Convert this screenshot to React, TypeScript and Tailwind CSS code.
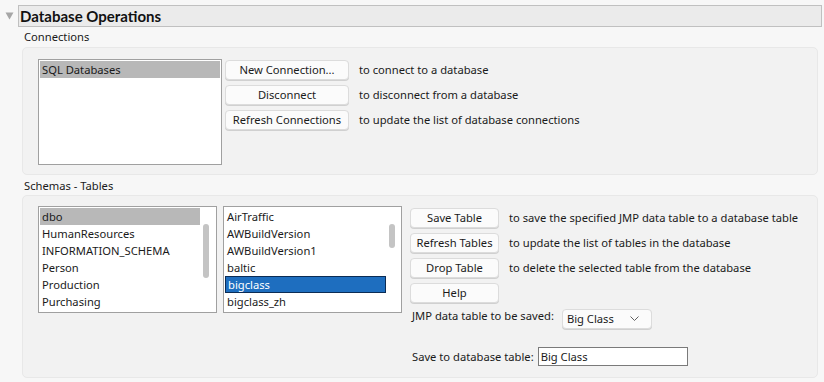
import React from "react";

const font = { fontFamily: '"Noto Sans", "Segoe UI", sans-serif' };

function Btn({ children, w }: { children: React.ReactNode; w: string }) {
  return (
    <div
      className={`${w} h-[20px] flex items-center justify-center rounded-[4px] border border-[#dcdcdc] bg-[#fbfbfb] text-[11.2px] text-[#1a1a1a] leading-none whitespace-nowrap shadow-[0_1px_0_#d0d0d0]`}
    >
      {children}
    </div>
  );
}

function Row({ btn, desc, w }: { btn: string; desc?: string; w: string }) {
  return (
    <div className="flex items-center">
      <Btn w={w}>{btn}</Btn>
      {desc && <span className="ml-[10px] text-[11.2px] text-[#1a1a1a] leading-none whitespace-nowrap">{desc}</span>}
    </div>
  );
}

function Item({ text, sel, blue }: { text: string; sel?: boolean; blue?: boolean }) {
  let cls = "h-[17px] flex items-center pl-[2px] text-[11.2px] leading-none whitespace-nowrap ";
  if (sel) cls += "bg-[#b8b8b8] text-[#1a1a1a] ";
  else if (blue) cls += "bg-[#1e6ebf] text-white border border-[#0b2c55] pl-[1px] ";
  else cls += "text-[#1a1a1a] ";
  return <div className={cls}>{text}</div>;
}

export default function App() {
  return (
    <div className="w-[824px] h-[382px] bg-[#f7f7f7] relative overflow-hidden" style={font}>
      <div className="flex items-center pt-[5px]">
        <div className="w-[18px] flex justify-center">
          <svg width="9" height="8" viewBox="0 0 9 8">
            <path d="M0.5 0.5 L8.5 0.5 L4.5 7.5 Z" fill="#a6a6a6" />
          </svg>
        </div>
        <div className="w-[804px] h-[22px] border border-[#c0c0c0] bg-[#ebebeb] flex items-center pl-[1px]">
          <span
            className="text-[15px] font-bold text-[#111] leading-none"
            style={{ fontFamily: 'Lato, "Noto Sans", sans-serif' }}
          >
            Database Operations
          </span>
        </div>
      </div>

      <div className="ml-[24px] mt-[2px] text-[11.2px] text-[#1a1a1a] leading-none h-[15px] flex items-center">Connections</div>

      <div className="ml-[22px] mt-[3px] w-[796px] h-[128px] rounded-[5px] border border-[#e8e8e8] bg-[#f2f2f2] pl-[15px] pt-[11px]">
        <div className="flex">
          <div className="w-[184px] h-[106px] border border-[#a0a0a0] bg-white p-[1px]">
            <Item text="SQL Databases" sel />
          </div>
          <div className="ml-[3px] mt-[1px] flex flex-col gap-[5px]">
            <Row w="w-[124px]" btn="New Connection..." desc="to connect to a database" />
            <Row w="w-[124px]" btn="Disconnect" desc="to disconnect from a database" />
            <Row w="w-[124px]" btn="Refresh Connections" desc="to update the list of database connections" />
          </div>
        </div>
      </div>

      <div className="ml-[24px] mt-[3px] text-[11.2px] text-[#1a1a1a] leading-none h-[15px] flex items-center">Schemas - Tables</div>

      <div className="ml-[22px] mt-[2px] w-[796px] h-[183px] rounded-[5px] border border-[#e8e8e8] bg-[#f2f2f2] pl-[15px] pt-[10px]">
        <div className="flex">
          <div className="w-[179px] h-[107px] border border-[#a0a0a0] bg-white p-[1px] flex">
            <div className="w-[160px]">
              <Item text="dbo" sel />
              <Item text="HumanResources" />
              <Item text="INFORMATION_SCHEMA" />
              <Item text="Person" />
              <Item text="Production" />
              <Item text="Purchasing" />
            </div>
            <div className="ml-[3px] mt-[16px] w-[6px] h-[54px] rounded-full bg-[#c4c4c4]" />
          </div>
          <div className="ml-[6px] w-[179px] h-[107px] border border-[#a0a0a0] bg-white p-[1px] flex">
            <div className="w-[161px]">
              <Item text="AirTraffic" />
              <Item text="AWBuildVersion" />
              <Item text="AWBuildVersion1" />
              <Item text="baltic" />
              <Item text="bigclass" blue />
              <Item text="bigclass_zh" />
            </div>
            <div className="ml-[3px] mt-[16px] w-[6px] h-[24px] rounded-full bg-[#c4c4c4]" />
          </div>
          <div className="ml-[8px] mt-[2px] flex flex-col">
            <div className="flex flex-col gap-[5px]">
              <Row w="w-[89px]" btn="Save Table" desc="to save the specified JMP data table to a database table" />
              <Row w="w-[89px]" btn="Refresh Tables" desc="to update the list of tables in the database" />
              <Row w="w-[89px]" btn="Drop Table" desc="to delete the selected table from the database" />
              <Row w="w-[89px]" btn="Help" />
            </div>
            <div className="flex items-start mt-[6px] ml-[2px]">
              <span className="text-[11.2px] text-[#1a1a1a] leading-none mt-[1px] whitespace-nowrap">JMP data table to be saved:</span>
              <div className="ml-[8px] w-[90px] h-[20px] rounded-[4px] border border-[#dcdcdc] bg-[#fbfbfb] shadow-[0_1px_0_#d0d0d0] flex items-center pl-[4px] pr-[12px] justify-between">
                <span className="text-[11.2px] text-[#1a1a1a] leading-none">Big Class</span>
                <svg width="9" height="6" viewBox="0 0 9 6">
                  <path d="M0.5 0.5 L4.5 4.5 L8.5 0.5" fill="none" stroke="#606060" strokeWidth="1" />
                </svg>
              </div>
            </div>
            <div className="flex items-center mt-[18px] ml-[2px]">
              <span className="text-[11.2px] text-[#1a1a1a] leading-none whitespace-nowrap">Save to database table:</span>
              <div className="ml-[4px] w-[150px] h-[19px] border border-[#7a7a7a] bg-white flex items-center pl-[2px]">
                <span className="text-[11.2px] text-[#1a1a1a] leading-none">Big Class</span>
              </div>
            </div>
          </div>
        </div>
      </div>
    </div>
  );
}
